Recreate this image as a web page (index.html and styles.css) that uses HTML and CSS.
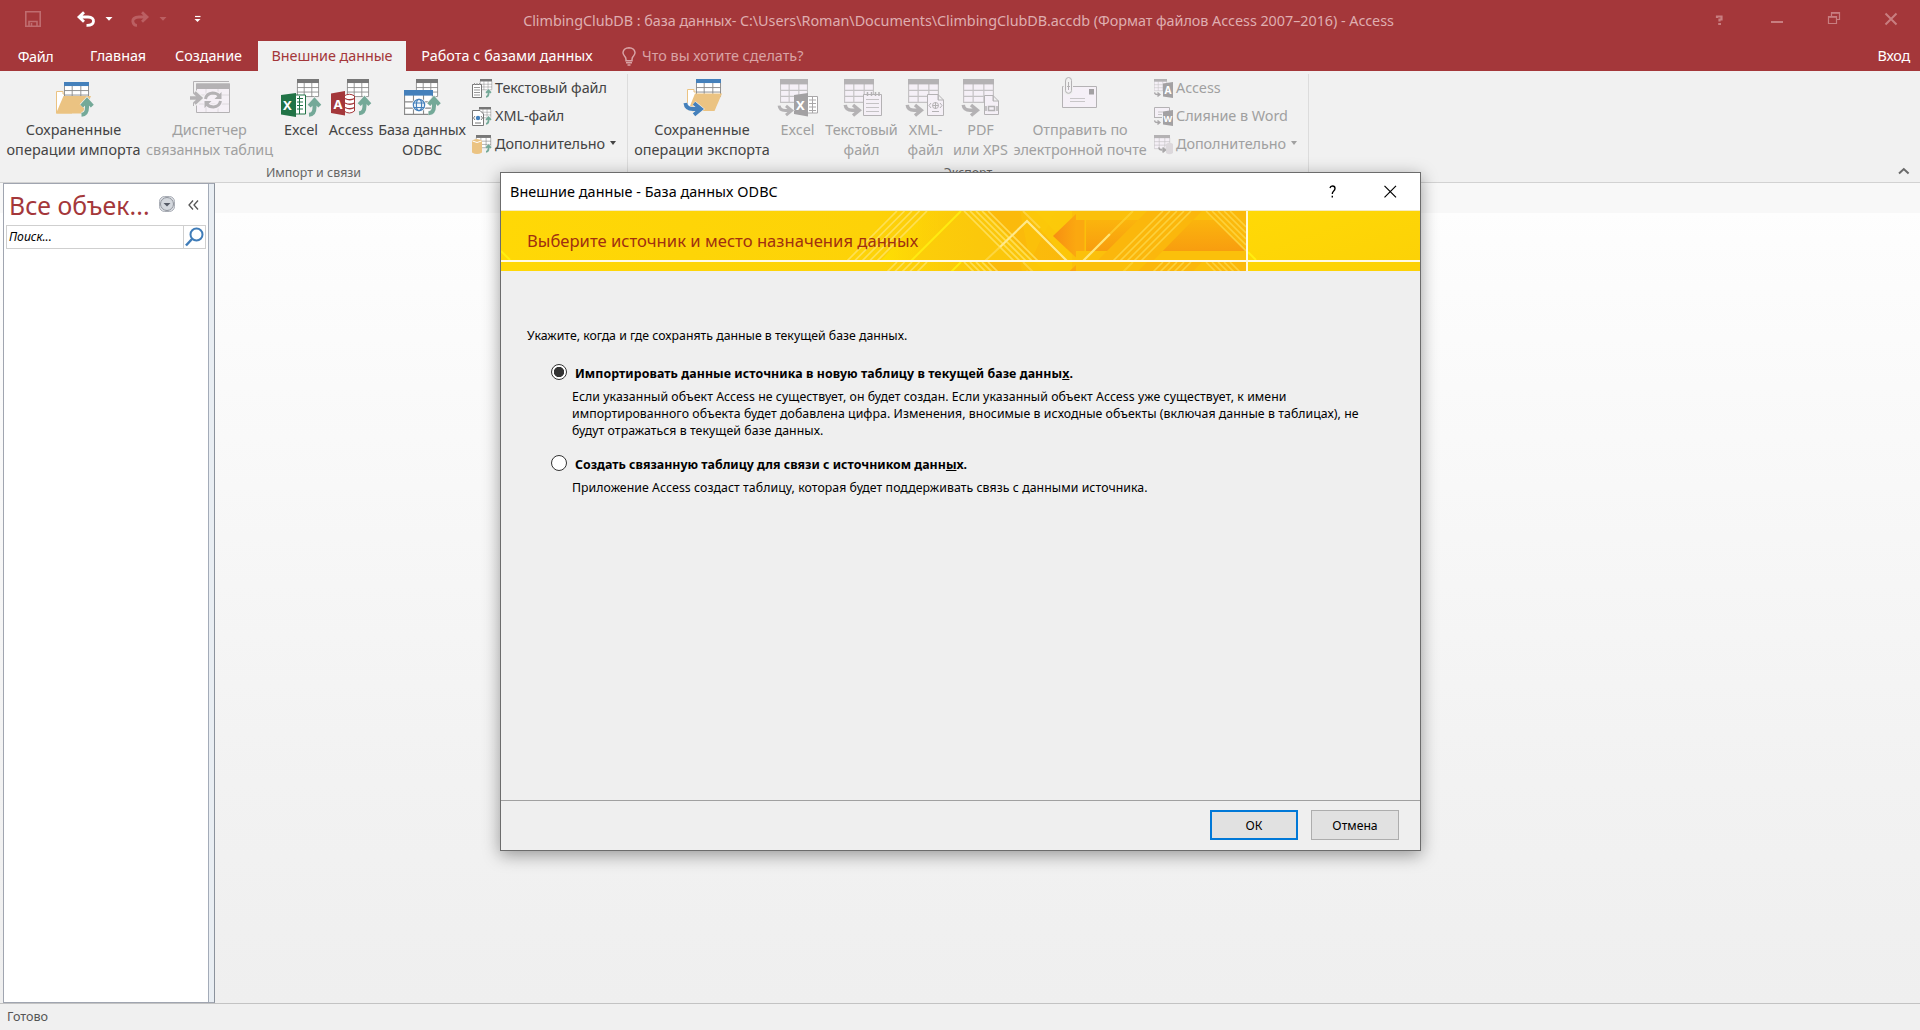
FILE: index.html
```html
<!DOCTYPE html>
<html lang="ru">
<head>
<meta charset="utf-8">
<title>ClimbingClubDB - Access</title>
<link rel="stylesheet" href="styles.css">
</head>
<body>
<svg class="defs" width="0" height="0">
  <defs>
    <symbol id="grid" viewBox="0 0 26 20" preserveAspectRatio="none" overflow="visible">
      <path class="g-fill" d="M0 0H26V20H0z"/>
      <path class="g-line" d="M.5 4V19.5H25.5V4M0 9.5H26M0 14.5H26M8.5 4V20M17.5 4V20"/>
      <path class="g-head" d="M0 0H26V4.5H0z"/>
    </symbol>
    <symbol id="up" viewBox="0 0 13 20" overflow="visible"><path d="M1 17.3Q6.5 17 6.5 10V3M1.2 8.6L6.5 2.8L11.8 8.6" fill="none" stroke="#f0f0f0" stroke-width="5.5"/><path d="M1 17.3Q6.5 17 6.5 10V3M1.2 8.6L6.5 2.8L11.8 8.6" fill="none" stroke="#74a998" stroke-width="4"/></symbol>
    <symbol id="out" viewBox="0 0 20 14" overflow="visible"><path d="M1.4 1Q2 7 9 7H17M10 1.2L17 7L10 12.8" fill="none" stroke="#f0f0f0" stroke-width="5"/><path d="M1.4 1Q2 7 9 7H17M10 1.2L17 7L10 12.8" fill="none" stroke="currentColor" stroke-width="3.8"/></symbol>
  </defs>
</svg>

<header class="top">
  <div class="titlebar">
    <svg width="220" height="41" viewBox="0 0 220 41" fill="none">
      <g stroke="#c06c6f"><path d="M25.8 11.8H40.2V26.2H25.8z" stroke-width="1.6"/><path d="M29 26V21.5H37V26M31.5 26V23" stroke-width="1.6"/></g>
      <path d="M84 12.2L79 17L84 21.8M80 17H88Q94 17.5 93.5 21.5Q93 25.5 86.5 25.3" stroke="#fff" stroke-width="2.8"/>
      <path d="M105.5 17H112.5L109 20.7z" fill="#fff"/>
      <path d="M142 12.2L147 17L142 21.8M146 17H139Q132.500 17.500 132.800 21.500Q133.500 25.500 137 25.300" stroke="#bb5f62" stroke-width="2.800"/>
      <path d="M159.500 17H166.500L163 20.700z" fill="#bb5f62"/>
      <path d="M195 16.500H200.500" stroke="#fff" stroke-width="1.200"/><path d="M194.500 19H200.500L197.500 22z" fill="#fff"/>
    </svg>
    <div class="apptitle">ClimbingClubDB : база данных- C:\Users\Roman\Documents\ClimbingClubDB.accdb (Формат файлов Access 2007–2016) - Access</div>
    <svg class="winctl" width="260" height="41" viewBox="1660 0 260 41" fill="none" stroke="#c87e80">
      <path d="M1717 18V16.500H1721.500V19.500H1719.500V21.500M1718.200 24H1721" stroke-width="2.200"/>
      <path d="M1771 22H1783" stroke-width="2"/>
      <path d="M1831.500 16V12.700H1839.500V19.500H1837M1828.500 16.700H1836.500V23.500H1828.500z" stroke-width="1.200"/><path d="M1831 13H1840M1828 17H1837" stroke-width="1.700"/>
      <path d="M1885.500 13.500L1896.500 24.500M1896.500 13.500L1885.500 24.500" stroke-width="2"/>
    </svg>
  </div>
  <nav class="tabs">
    <a class="tab file">Файл</a><a class="tab home">Главная</a><a class="tab create">Создание</a><a class="tab active">Внешние данные</a><a class="tab dbtools">Работа с базами данных</a>
    <svg width="15" height="30" viewBox="621 41 15 30" fill="none" stroke="#d9a3a5" stroke-width="1.500"><path d="M626 59.500Q626 57.500 624.500 56Q622.800 54 623 52.300Q623.800 48 629 47.800Q634.200 48 635 52.300Q635.200 54 633.500 56Q632 57.500 632 59.500V60.800H626zM626 62.800H632"/><path d="M627.500 65H630.500"/></svg>
    <span class="tell">Что вы хотите сделать?</span>
    <a class="signin">Вход</a>
  </nav>
</header>

<section class="ribbon">
  <div class="group">
    <div class="items">
      <div class="big w147">
        <svg width="147" height="45" viewBox="0 74 147 45">
          <path d="M56.500 113V91.500H63V94H72V113z" fill="#fff" stroke="#ebc382"/>
          <use href="#grid" class="blue" x="64" y="82" width="25" height="18"/>
          <path d="M63.500 96H91L83.500 113.500H56z" fill="#ebc382"/>
          <use href="#up" x="80.500" y="97.500" width="13" height="20"/>
        </svg><span class="wide">Сохраненные<br>операции импорта</span></div>
      <div class="big off w125">
        <svg width="125" height="45" viewBox="147 74 125 45" fill="none" stroke="#b4b2b4">
          <path d="M193.500 106V81.500H229" />
          <path d="M196.500 84V112.500H229.500V84z" fill="#f5f0f6"/><path d="M197 88.500H229M199 95H229M199 104H229M206 89V112M218 89V112" stroke="#dedade"/><path d="M196 83.500H230V89H196z" fill="#b4b2b4" stroke="none"/>
          <path d="M190 98H199M194.500 92.500L200.500 98L194.500 103.500" stroke="#f0f0f0" stroke-width="6"/><path d="M190 98H199M194.500 92.500L200.500 98L194.500 103.500" stroke-width="3.600"/>
          <circle cx="213" cy="100" r="7" stroke="#f5f0f6" stroke-width="6"/><path d="M205.500 99Q206.500 93.500 212.500 93Q217 93 219.500 96M220.500 101Q219.500 106.500 213.500 107Q209 107 206.500 104" stroke-width="3"/><path d="M221.500 92V99H214.500zM204.500 108V101H211.500z" fill="#b4b2b4" stroke="none"/>
        </svg><span>Диспетчер<br>связанных таблиц</span></div>
      <div class="big w58">
        <svg width="58" height="45" viewBox="272 74 58 45">
          <use href="#grid" class="dark" x="297" y="79" width="22" height="18"/>
          <path d="M295 95H305.500V114H295z" fill="#fff" stroke="#217346"/><path d="M297 98.500H303M297 102H303M297 105.500H303M297 109H303M299.500 96V114" stroke="#217346"/>
          <path d="M281 95L296 93V117L281 114.500z" fill="#217346"/><text x="283" y="110" class="lt" font-size="13">X</text>
          <use href="#up" x="308" y="97.500" width="13" height="20"/>
        </svg><span>Excel</span></div>
      <div class="big w42">
        <svg width="42" height="45" viewBox="330 74 42 45">
          <use href="#grid" class="dark" x="347" y="79" width="22" height="18"/>
          <path d="M344 96Q349.500 92.500 354.500 96V111Q349.500 115 344 111z" fill="#fff" stroke="#a4373a"/><path d="M345 98.500Q350 101 354.500 98.500M345 103Q350 105.500 354.500 103M345 107.500Q350 110 354.500 107.500" fill="none" stroke="#a4373a" stroke-width="1.300"/>
          <path d="M331 93.500L345 91V115.500L331 113z" fill="#a4373a"/><text x="333.500" y="108.500" class="lt" font-size="13">A</text>
          <use href="#up" x="358" y="96" width="13" height="20"/>
        </svg><span>Access</span></div>
      <div class="big w100">
        <svg width="100" height="45" viewBox="372 74 100 45">
          <use href="#grid" class="dark" x="416" y="79" width="22" height="18"/>
          <use href="#grid" class="bluegray" x="404" y="90" width="29" height="25"/>
          <circle cx="419" cy="105" r="7" fill="#f5f8fb"/><g fill="none" stroke="#4480bb" stroke-width="1.200"><circle cx="419" cy="105" r="5.600"/><ellipse cx="419" cy="105" rx="2.600" ry="5.600"/><path d="M413.500 103H424.500M413.500 107.500H424.500"/></g>
          <use href="#up" x="427.500" y="96" width="13" height="20"/>
        </svg><span>База данных<br>ODBC</span></div>
      <div class="smalls">
        <div class="small"><svg width="23" height="28" viewBox="472 75 23 28"><use href="#grid" class="dark" x="480" y="79" width="12" height="11"/><path d="M472.500 84.500H481.500V97.500H472.500z" fill="#fff" stroke="#777"/><path d="M474 87.500H480M474 90H480M474 92.500H480M474 95H480M474.500 83V85M477 83V85M479.500 83V85" stroke="#999"/><use href="#up" x="485" y="89" width="7" height="9"/></svg>Текстовый файл</div>
        <div class="small"><svg width="23" height="28" viewBox="472 103 23 28"><use href="#grid" class="dark" x="479" y="107" width="12" height="11"/><path d="M472.500 110.500H480L483.500 114V125.500H472.500z" fill="#fff" stroke="#777"/><circle cx="478" cy="118" r="2.200" fill="#4480bb"/><path d="M475 116L473.500 118L475 120M481 116L482.500 118L481 120M475 123H481" stroke="#777" fill="none"/><use href="#up" x="485" y="116" width="7" height="9"/></svg>XML-файл</div>
        <div class="small"><svg width="23" height="28" viewBox="472 131 23 28"><use href="#grid" class="dark" x="476" y="135" width="15" height="13"/><path d="M472 140.500Q477 137.500 482 140.500V152.500Q477 155.500 472 152.500z" fill="#ebc382"/><path d="M472.500 141Q477 144 481.500 141" stroke="#fff" fill="none"/><use href="#up" x="485" y="144" width="7" height="9"/></svg>Дополнительно<i class="dd"></i></div>
      </div>
    </div>
    <div class="label">Импорт и связи</div>
  </div>
  <div class="group export">
    <div class="items">
      <div class="big w148">
        <svg width="148" height="45" viewBox="628 74 148 45">
          <path d="M687.500 106V89.500H694V92H702V111H692z" fill="#fff" stroke="#ebc382"/>
          <use href="#grid" class="blue" x="696" y="79" width="25" height="18"/>
          <path d="M695 93.500H722L714.500 111H688z" fill="#ebc382"/>
          <use href="#out" x="684" y="102" width="20" height="14" color="#4480bb"/>
        </svg><span class="wide">Сохраненные<br>операции экспорта</span></div>
      <div class="big off w43">
        <svg width="43" height="45" viewBox="776 74 43 45">
          <use href="#grid" class="gray" x="780" y="79" width="28" height="24"/>
          <path d="M807 96.500H817.500V113H807z" fill="#fff" stroke="#a9a7a9"/><path d="M809 100H816M809 103.500H816M809 107H816M809 110.500H816M812.500 97V113" stroke="#a9a7a9"/>
          <path d="M794 95L808 93V116.500L794 114z" fill="#a3a1a3"/><text x="796" y="110" class="lt" font-size="13">X</text>
          <use href="#out" x="778" y="104" width="16" height="13" color="#b4b2b4"/>
        </svg><span>Excel</span></div>
      <div class="big off w85">
        <svg width="85" height="45" viewBox="819 74 85 45">
          <use href="#grid" class="gray" x="844" y="79" width="30" height="24"/>
          <path d="M863.500 94.500H881.500V115.500H863.500z" fill="#f5f0f7" stroke="#b4b2b4"/><path d="M866 99.500H879M866 103.500H879M866 107.500H879M866 111.500H879" stroke="#c4c2c4"/><path d="M867.500 92V96M871.500 92V96M875.500 92V96M879 92V96" stroke="#b4b2b4" stroke-width="1.500"/>
          <use href="#out" x="844" y="103.500" width="18" height="13.500" color="#b4b2b4"/>
        </svg><span>Текстовый<br>файл</span></div>
      <div class="big off w43">
        <svg width="43" height="45" viewBox="904 74 43 45">
          <use href="#grid" class="gray" x="908" y="79" width="31" height="24"/>
          <path d="M927.500 94.500H938L943.500 100V115.500H927.500zM938 94.500V100H943.500" fill="#f5f0f7" stroke="#b4b2b4"/><path d="M931 103L929 105.500L931 108M940 103L942 105.500L940 108M932 111.500H939M935.500 102V109M932.500 105.500H938.500" stroke="#b4b2b4" fill="none"/><circle cx="935.500" cy="105.500" r="3" fill="none" stroke="#b4b2b4"/>
          <use href="#out" x="906" y="103.500" width="18" height="13.500" color="#b4b2b4"/>
        </svg><span>XML-<br>файл</span></div>
      <div class="big off w67">
        <svg width="67" height="45" viewBox="947 74 67 45">
          <use href="#grid" class="gray" x="963" y="79" width="31" height="24"/>
          <path d="M984.500 95.500H993L998.500 101V114.500H984.500zM993 95.500V101H998.500" fill="#f5f0f7" stroke="#b4b2b4"/><path d="M988.500 106.500H994.500V110.500H988.500zM986 106V111M997 106V111" stroke="#b4b2b4" fill="none" stroke-width="1.500"/>
          <use href="#out" x="962" y="103.500" width="18" height="13.500" color="#b4b2b4"/>
        </svg><span>PDF<br>или XPS</span></div>
      <div class="big off w132">
        <svg width="132" height="45" viewBox="1014 74 132 45" fill="none" stroke="#b4b2b4">
          <path d="M1062.500 86.500H1096.500V107.500H1062.500z" fill="#f5f0f7"/><path d="M1089 89H1094V94.500H1089z" fill="#a3a1a3" stroke="none"/><path d="M1070 98.500H1085M1070 101.500H1085" stroke="#c8c6c8"/>
          <path d="M1065 84V91Q1065 93.500 1068 93.500Q1071.500 93.500 1071.500 91V81Q1071.500 78 1068.500 78Q1065.500 78 1065.500 81V90" stroke="#f0f0f0" stroke-width="3"/><path d="M1065.500 81V90.500Q1065.500 93.300 1068.500 93.300Q1071.500 93.300 1071.500 90.500V80.500Q1071.500 77.500 1068.500 77.500Q1065.500 77.500 1065.500 81M1068.500 82V90"/>
        </svg><span>Отправить по<br>электронной почте</span></div>
      <div class="smalls off">
        <div class="small"><svg width="22" height="28" viewBox="1154 75 22 28"><use href="#grid" class="gray" x="1154" y="79" width="13" height="12"/><path d="M1163 83.500L1173 82V98L1163 96.500z" fill="#a3a1a3"/><text x="1164.500" y="94" class="lt" font-size="10">A</text><use href="#out" x="1154" y="92" width="7" height="5" color="#a9a7a9"/></svg>Access</div>
        <div class="small"><svg width="22" height="28" viewBox="1154 103 22 28"><path d="M1154.500 118V107.500H1169.500V111M1154.500 117.500H1162" fill="#f5f0f7" stroke="#b4b2b4"/><path d="M1158 112H1163M1158 114.500H1162" stroke="#c8c6c8"/><path d="M1163 111.500L1173 110V126L1163 124.500z" fill="#a3a1a3"/><text x="1163.500" y="121.500" class="lt" font-size="9">W</text><use href="#out" x="1154" y="120" width="7" height="5" color="#a9a7a9"/></svg>Слияние в Word</div>
        <div class="small"><svg width="22" height="28" viewBox="1154 131 22 28"><use href="#grid" class="gray" x="1154" y="135" width="16" height="14"/><path d="M1166 144Q1169.500 141.500 1173 144V153Q1169.500 155.500 1166 153z" fill="#dcd8dc"/><use href="#out" x="1158" y="147" width="9" height="6" color="#a9a7a9"/></svg>Дополнительно<i class="dd"></i></div>
      </div>
    </div>
    <div class="label">Экспорт</div>
  </div>
  <svg class="collapse" width="12" height="8" viewBox="0 0 12 8"><path d="M1 6.500L5.800 2L10.600 6.500" fill="none" stroke="#6a6a6a" stroke-width="2"/></svg>
</section>

<main class="work">
  <aside class="nav">
    <div class="pane">
      <div class="pane-head"><h1>Все объек...</h1>
        <svg width="16" height="16" viewBox="0 0 16 16"><rect x=".5" y=".5" width="15" height="15" rx="5" fill="#dfe2e7" stroke="#a9adb5"/><circle cx="8" cy="8" r="6.500" fill="#d4d8de" stroke="#8f949c"/><path d="M4.500 7H11.500L8 10.500z" fill="#555a66"/></svg>
        <svg class="chev" width="11" height="12" viewBox="0 0 11 12"><path d="M5 1.500L1 6L5 10.500M10 1.500L6 6L10 10.500" fill="none" stroke="#555" stroke-width="1.300"/></svg>
      </div>
      <div class="search"><span>Поиск...</span><svg width="21" height="22" viewBox="0 0 21 22" fill="none" stroke="#3f7cb8"><circle cx="12.500" cy="8.500" r="6" stroke-width="2"/><path d="M8 13L2 19.500" stroke-width="2.500"/></svg></div>
    </div>
    <div class="splitter"></div>
  </aside>
  <div class="canvas"></div>
</main>
<footer class="status">Готово</footer>

<div class="dialog">
  <div class="dlg-title"><span>Внешние данные - База данных ODBC</span>
    <svg width="68" height="14" viewBox="0 0 68 14" fill="none" stroke="#000"><path d="M1 3Q1.500 1 3.500 1Q6 1 6 3.500Q6 5 4.500 6.200Q3.300 7.200 3.300 9M3.300 10.700V12.500" stroke-width="1.400"/><path d="M55.500 .8L67 12.300M67 .8L55.500 12.300" stroke-width="1.200"/></svg>
  </div>
  <div class="banner">
    <svg width="919" height="61" viewBox="501 210 919 61">
      <defs>
        <linearGradient id="base"><stop offset="0" stop-color="#ffd806"/><stop offset=".5" stop-color="#fdd208"/><stop offset=".64" stop-color="#fbc80b"/><stop offset="1" stop-color="#fabb0c"/></linearGradient>
        <linearGradient id="flat" x2="1" y2="1"><stop offset="0" stop-color="#ffd906"/><stop offset="1" stop-color="#fcd106"/></linearGradient>
        <linearGradient id="arr"><stop offset="0" stop-color="#f78e12"/><stop offset="1" stop-color="#fba810"/></linearGradient>
        <linearGradient id="bar" x2="0" y2="1"><stop offset="0" stop-color="#fbb40d"/><stop offset="1" stop-color="#f89d0f"/></linearGradient>
        <linearGradient id="glow"><stop offset="0" stop-color="#ffe900"/><stop offset="1" stop-color="#fdd405" stop-opacity="0"/></linearGradient>
        <clipPath id="c1"><path d="M501 211H1246V260H501z"/></clipPath><clipPath id="c2"><path d="M501 262H1246V271H501z"/></clipPath>
        <g id="pat">
          <path d="M985 211H1035L1085 262H1035z" fill="#fab30d" opacity=".65"/>
          <path d="M1030 262L1055 211H1020z" fill="#fdcc09" opacity=".35"/>
          <path d="M1025 211H1072V262H1068z" fill="#fccc09" opacity=".7"/>
          <path d="M880 262L925 211H960L910 262z" fill="url(#glow)" opacity=".6"/>
          <path d="M1072 211H1246V262H1072z" fill="#fbc00b"/>
          <path d="M1053 236L1076 214V257.500z" fill="url(#arr)"/><path d="M1076 220H1084.500V251H1076z" fill="#fba810"/>
          <path d="M1086 220H1246V251H1086z" fill="url(#bar)"/>
          <path d="M1106 252L1147 211H1202L1152 262H1096z" fill="#fbb70c"/>
          <path d="M1205 211H1246V251z" fill="#fbb90c"/>
          <g stroke="#ffe56c" stroke-width="1.700" opacity=".75" fill="none">
            <path d="M897 211L847 261M904.500 211L854.500 261M912 211L862 261M919.500 211L869.500 261M927 211L877 261"/>
            <path d="M964 211L1014 261M970 211L1020 261M976 211L1026 261M982 211L1032 261M988 211L1038 261"/>
          </g>
          <g stroke="#ffdf55" stroke-width="1.600" opacity=".65" fill="none">
            <path d="M1163 211L1113 261M1170 211L1120 261M1177 211L1127 261M1184 211L1134 261M1191 211L1141 261"/>
            <path d="M1206 211L1246 251M1212 211L1246 245M1218 211L1246 239M1224 211L1246 233M1230 211L1246 227"/>
          </g>
          <path d="M961 211L911 261" stroke="#ffeb10" stroke-width="2"/>
          <path d="M1000 247L1027 221L1067 261" fill="none" stroke="#ffe98c" stroke-width="2.200"/><path d="M985 261L1000 247M1023 211L1040 228" stroke="#ffe063" stroke-width="2" opacity=".6"/>
          <path d="M1083 261L1110 234" stroke="#ffe679" stroke-width="2.200"/><path d="M1110 234L1133 211" stroke="#ffd83c" stroke-width="2" opacity=".6"/>
        </g>
      </defs>
      <path d="M501 210H1246V271H501z" fill="url(#base)"/>
      <g clip-path="url(#c1)"><use href="#pat"/></g><g clip-path="url(#c2)"><use href="#pat" y="51"/></g>
      <path d="M1248 210H1420V271H1248z" fill="url(#flat)"/>
      <path d="M1248 252L1256 260M501 251L510 260" stroke="#ffee10" stroke-width="2"/>
      <path d="M501 210.500H1420" stroke="#f6ecc4"/><path d="M501 261H1420" stroke="#fffbe6" stroke-width="2"/><path d="M1247 211V271" stroke="#fff8dc" stroke-width="2"/>
    </svg>
    <h2>Выберите источник и место назначения данных</h2>
  </div>
  <div class="dlg-body">
    <p class="intro">Укажите, когда и где сохранять данные в текущей базе данных.</p>
    <div class="opt"><i class="radio on"></i><b class="b1">Импортировать данные источника в новую таблицу в текущей базе данны<u>х</u>.</b></div>
    <p class="desc">Если указанный объект Access не существует, он будет создан. Если указанный объект Access уже существует, к имени<br>импортированного объекта будет добавлена цифра. Изменения, вносимые в исходные объекты (включая данные в таблицах), не<br>будут отражаться в текущей базе данных.</p>
    <div class="opt second"><i class="radio"></i><b class="b2">Создать связанную таблицу для связи с источником данн<u>ы</u>х.</b></div>
    <p class="desc">Приложение Access создаст таблицу, которая будет поддерживать связь с данными источника.</p>
  </div>
  <div class="dlg-foot"><button class="btn primary">ОК</button><button class="btn">Отмена</button></div>
</div>
</body>
</html>
```
FILE: styles.css
```css
*{box-sizing:border-box}
body{margin:0;width:1920px;height:1030px;overflow:hidden;display:flex;flex-direction:column;background:#f0f0f0;font-family:"Noto Sans","Open Sans",sans-serif;font-size:14.4px;color:#444;white-space:nowrap;position:relative}
svg{display:block;flex:none}
.defs{position:absolute}
h1,h2,p{margin:0;font-weight:400}

.dark{--h:#777}
use.blue,use.bluegray{--h:#4480bb}
use.gray{--h:#b4b2b4;--f:#f5f0f7;--l:#c4c2c4}
.g-fill{fill:var(--f,#fff)}
.g-line{fill:none;stroke:var(--l,#8a8a8a)}
.g-head{fill:var(--h,#777)}
.lt{font-family:"Noto Sans",sans-serif;font-weight:700;fill:#fff}

.top{height:71px;background:#a4373a;color:#fff}
.titlebar{height:41px;display:grid;grid-template-columns:1fr auto 1fr}
.apptitle{line-height:42px;height:41px;font-size:14.4px;letter-spacing:-.05px;color:#dfaeb0;margin-right:3px}
.winctl{justify-self:end}
.tabs{display:flex;height:30px;line-height:30px}
.tab{text-align:center;flex:none;letter-spacing:-.05px}
.file{width:71px;margin-right:6px;padding-top:1px;letter-spacing:-.35px}
.home{width:82px}
.create{width:99px}
.active{width:148px;background:#f1f1f1;color:#a4373a}
.dbtools{width:202px;margin-right:13px;letter-spacing:.03px}
.tell{margin-left:6px;color:#d9a3a5}
.signin{margin-left:auto;margin-right:10px;letter-spacing:-.2px}

.ribbon{height:112px;flex:none;background:#f1f1f1;border-bottom:1px solid #d2d2d2;display:flex}
.group{width:628px;padding-top:3px;position:relative;border-right:1px solid transparent;border-image:linear-gradient(to bottom,transparent 4px,#dcdcdc 4px) 1}
.export{width:681px}
.items{display:flex;height:88px}
.big{flex:none;text-align:center;line-height:20px;letter-spacing:-.05px;display:flex;flex-direction:column;align-items:center}
.big span{padding-top:1px}
.wide{letter-spacing:.07px}
.off{color:#a0a0a0}
.w147{width:147px}.w125{width:125px}.w58{width:58px}.w42{width:42px}.w100{width:100px}.w148{width:148px}.w43{width:43px}.w85{width:85px}.w67{width:67px}.w132{width:132px}
.smalls.off{margin-left:8px}
.small{display:flex;height:28px;line-height:30px;align-items:center;letter-spacing:-.05px}
.small svg{margin-top:1px}
.dd{border:3.5px solid transparent;border-top:4px solid currentColor;border-bottom:0;margin-left:5px;margin-top:-2px}
.label{text-align:center;font-size:12.400px;line-height:20px;color:#666;margin-top:1px}
.collapse{margin-left:auto;margin-right:10px;margin-top:96px}

.work{flex:1;display:flex;background:linear-gradient(#f8f8f8 30px,#fefefe 30px,#fdfdfd 56px,#f2f2f2 600px,#efefef)}
.nav{margin-left:3px;width:212px;display:flex;border:1px solid #a0a5b0;border-right-color:#8b929c}
.pane{width:204px;flex:none;background:#fff;padding:0 2px}
.splitter{flex:1;background:#e9eef3;border-left:1px solid #a3abb8}
.pane-head{height:41px;display:flex;align-items:center}
h1{font-size:24.8px;line-height:42px;color:#a4373a;margin-left:3px;width:147px;letter-spacing:.08px}
.pane-head svg{margin-left:3px;margin-top:-2px}
.pane-head .chev{margin-left:13px;margin-top:1px}
.search{height:24px;width:200px;border:1px solid #cfcfcf;display:flex;line-height:22px;color:#000;font-size:12.200px;font-style:italic}
.search span{flex:1;padding-left:2px;border-right:1px solid #cfcfcf}
.status{height:27px;flex:none;border-top:1px solid #c3c3c3;font-size:12.600px;line-height:25px;padding-left:7px;color:#555}

.dialog{position:absolute;left:500px;top:172px;width:921px;height:679px;background:#efefef;border:1px solid #6c6c6c;box-shadow:0 4px 16px rgba(0,0,0,.38);color:#000;display:flex;flex-direction:column}
.dlg-title{height:37px;flex:none;background:#fff;padding:0 23px 0 9px;display:flex;justify-content:space-between;align-items:center;line-height:37px;letter-spacing:.05px}
.banner{height:61px;flex:none;display:grid}
.banner>*{grid-area:1/1}
h2{font-size:16.600px;line-height:62px;height:61px;padding-left:26px;color:#a03010;z-index:1;letter-spacing:.02px}
.dlg-body{padding:56px 26px 0;flex:1;font-size:12.300px;line-height:17.100px}
.intro{margin-bottom:21px}
.opt{display:flex;height:17px;margin-left:24px;align-items:flex-start}
.radio{width:16px;height:16px;border:1.300px solid #333;border-radius:50%;background:#fff;margin-right:8px;margin-top:-1.500px}
.radio.on{background:radial-gradient(circle,#333 4.800px,#fff 5.500px)}
.second{margin-top:17px}
.desc{margin:6px 0 0 45px;letter-spacing:.06px}
b{font-size:12.400px}
.b1{letter-spacing:.07px}
.dlg-foot{height:50px;flex:none;border-top:1px solid #a0a0a0;display:flex;justify-content:flex-end;gap:13px;padding:9px 21px 0 0}
.btn{width:88px;height:30px;background:#e1e1e1;border:1px solid #adadad;font:12.200px "Noto Sans","Open Sans",sans-serif;padding:0}
.primary{border:2px solid #0078d7}
```
